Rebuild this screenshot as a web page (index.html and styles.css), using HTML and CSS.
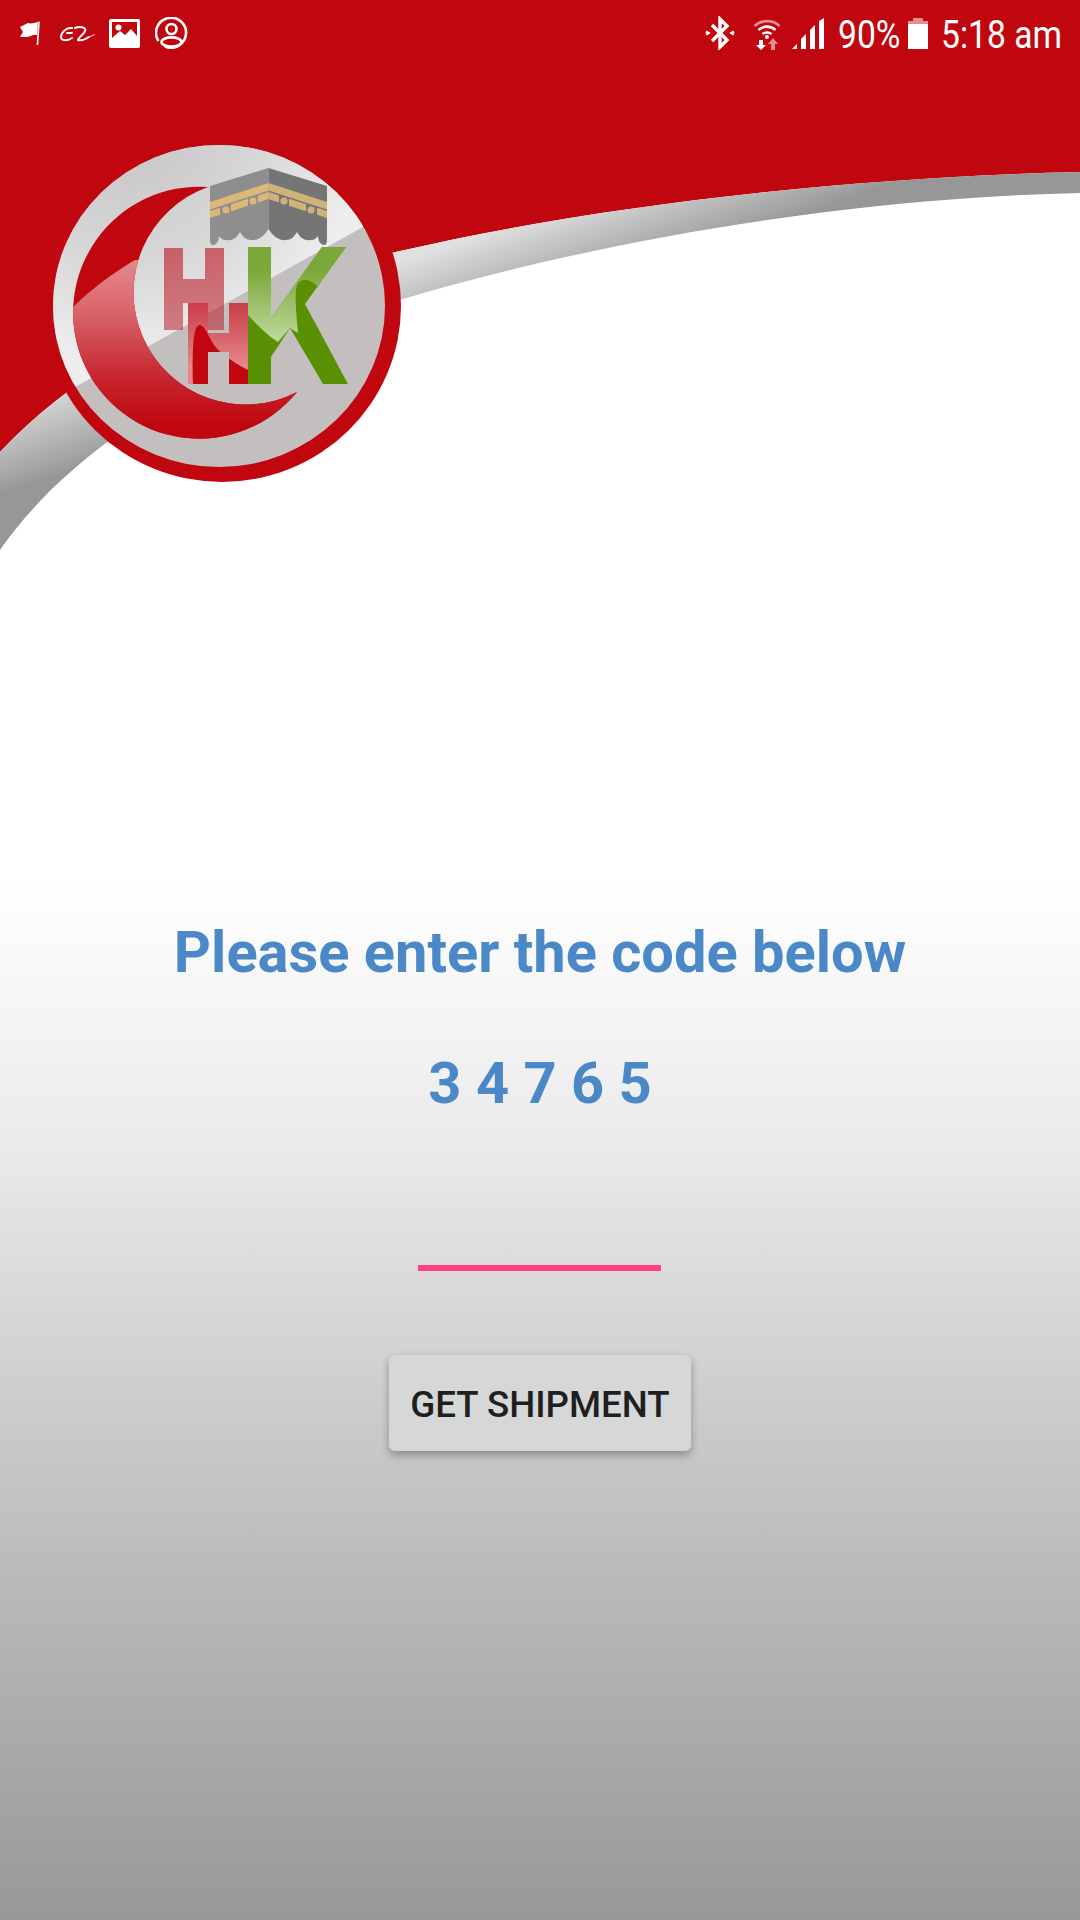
FILE: index.html
```html
<!DOCTYPE html>
<html lang="en">
<head>
    <meta charset="UTF-8">
    <title>Get Shipment</title>
    <meta name="viewport" content="width=device-width, initial-scale=1.0">
    <link rel="stylesheet" href="styles.css">
</head>
<body>
<div class="page">

    <!-- red header, grey swoosh and logo -->
    <svg class="header-art" width="1080" height="600" viewBox="0 0 1080 600">
        <defs>
            <linearGradient id="bandGrad" gradientUnits="userSpaceOnUse" x1="0" y1="400" x2="31" y2="489">
                <stop offset="0" stop-color="#e2e1e1"/>
                <stop offset="0.4" stop-color="#c2c2c2"/>
                <stop offset="0.75" stop-color="#a8a8a8"/>
                <stop offset="0.95" stop-color="#979797"/>
            </linearGradient>
            <radialGradient id="glassGrad" gradientUnits="userSpaceOnUse" cx="130" cy="130" r="260">
                <stop offset="0" stop-color="#c6c4c4"/>
                <stop offset="0.5" stop-color="#d8d7d7"/>
                <stop offset="0.9" stop-color="#eeeeee"/>
            </radialGradient>
            <linearGradient id="moonGrad" gradientUnits="userSpaceOnUse" x1="0" y1="262" x2="0" y2="425">
                <stop offset="0" stop-color="#e4878b"/>
                <stop offset="0.3" stop-color="#d9666d"/>
                <stop offset="0.7" stop-color="#c7262f"/>
                <stop offset="1" stop-color="#c0070f"/>
            </linearGradient>
            <linearGradient id="hOneGrad" gradientUnits="userSpaceOnUse" x1="0" y1="248" x2="0" y2="330">
                <stop offset="0" stop-color="#bc1725" stop-opacity="0.62"/>
                <stop offset="1" stop-color="#bc1725" stop-opacity="0.52"/>
            </linearGradient>
            <linearGradient id="hTwoGrad" gradientUnits="userSpaceOnUse" x1="0" y1="303" x2="0" y2="368">
                <stop offset="0" stop-color="#c93c47"/>
                <stop offset="1" stop-color="#e5898d"/>
            </linearGradient>
            <linearGradient id="kGrad" gradientUnits="userSpaceOnUse" x1="0" y1="270" x2="0" y2="338">
                <stop offset="0" stop-color="#7ba83a"/>
                <stop offset="1" stop-color="#bcd79a"/>
            </linearGradient>
            <clipPath id="discClip"><ellipse cx="219" cy="306" rx="166" ry="161"/></clipPath>
            <clipPath id="hTwoClip"><path d="M188,303H208V333H229V303H248V384H229V352H208V384H188Z"/></clipPath>
            <clipPath id="kClip"><path d="M248,247H271V318L322,247H346L305,304L348,384H323L290,328L271,357V384H248Z"/></clipPath>
            <clipPath id="moonClip"><path d="M208,187A126,126 0 1 0 297,392A112,112 0 1 1 208,187Z"/></clipPath>
            <polygon id="kaabaBand" points="210,202 268.5,183 268.5,190.5 210,209.5"/>
            <g id="kaabaTrim">
                <polygon points="210,211 220,207.8 220,214.8 210,218"/>
                <polygon points="231,204.3 248,198.8 248,205.8 231,211.3"/>
                <polygon points="258,195.6 268.5,192 268.5,199 258,202.6"/>
                <circle cx="226" cy="210" r="3.6"/>
                <circle cx="253" cy="201" r="3.6"/>
            </g>
        </defs>

        <path fill="#c0070f" d="M0,0H1080V172C850,177 600,205 400,251C250,285 100,345 0,452Z"/>
        <path fill="url(#bandGrad)" d="M0,452C100,345 250,285 400,251C600,205 850,177 1080,172V193C850,198 600,240 400,300C200,365 70,450 0,550Z"/>

        <ellipse cx="222" cy="306" rx="179" ry="176" fill="#c0070f"/>
        <ellipse cx="219" cy="306" rx="166" ry="161" fill="#c3bfbe"/>
        <polygon clip-path="url(#discClip)" fill="url(#glassGrad)" points="40,130 400,130 363,227 75,387 40,405"/>

        <path fill="#c0070f" d="M208,187A126,126 0 1 0 297,392A112,112 0 1 1 208,187Z"/>
        <path clip-path="url(#moonClip)" fill="url(#moonGrad)" d="M72,308C84,296 106,277 135,260H330V450H60Z"/>

        <path fill="url(#hOneGrad)" d="M164,248H183V279H205V248H224V330H205V303H183V330H164Z"/>
        <path fill="url(#hTwoGrad)" d="M188,303H208V333H229V303H248V384H229V352H208V384H188Z"/>
        <path clip-path="url(#hTwoClip)" fill="#c0070f" d="M193,384C192,350 193,324 200,325C207,326 210,345 222,353C230,360 240,366 248,370V384Z"/>

        <path fill="#5a9104" d="M248,247H271V318L322,247H346L305,304L348,384H323L290,328L271,357V384H248Z"/>
        <path clip-path="url(#kClip)" fill="url(#kGrad)" d="M244,240H350L318,287C312,279 300,277 297,285C294,296 297,320 298,333L290,328L278,342C268,336 258,326 248,315L244,312Z"/>

        <path fill="#8e8e8e" d="M210,186L268.5,168V229C264,236 258,241 251,240C246,240 243,237 240,232C237,238 232,241 226,240C222,240 221,238 219,236C219,241 216,245 213,245C211,245 210,243 210,240Z"/>
        <path fill="#757575" d="M327,186L268.5,168V229C273,236 279,241 286,240C291,240 294,237 297,232C300,238 305,241 311,240C315,240 316,238 318,236C318,241 321,245 324,245C326,245 327,243 327,240Z"/>
        <use href="#kaabaBand" fill="#d9b878"/>
        <use href="#kaabaBand" fill="#ceb27a" transform="translate(537,0) scale(-1,1)"/>
        <use href="#kaabaTrim" fill="#d9b878"/>
        <use href="#kaabaTrim" fill="#ceb27a" transform="translate(537,0) scale(-1,1)"/>
    </svg>

    <header class="status-bar">
        <div class="status-group">
            <svg class="icon icon-flag" width="20" height="24" viewBox="0 0 20 24">
                <path fill="#fff" d="M0,6C3,5 5,3 8,2C11,3 14,2 18,1L17,14C13,13 11,16 7,16C5,16 2,16 0,16L3,11Z"/>
                <path fill="none" stroke="#fff" stroke-width="1.6" d="M19,0.5L17.4,24"/>
            </svg>
            <svg class="icon icon-ali" width="35" height="18" viewBox="0 0 35 18">
                <path fill="none" stroke="#fff" stroke-width="2" stroke-linecap="round" d="M12,4C6,3 1,9 1,13C1,17 8,17 12,14M7,9H12"/>
                <path fill="none" stroke="#fff" stroke-width="2" stroke-linecap="round" d="M15,4C19,2 27,3 25,7C24,10 18,14 18,16C22,17 26,15 29,13"/>
                <path fill="none" stroke="#fff" stroke-width="0.8" stroke-linecap="round" d="M29,13L35,10.5"/>
            </svg>
            <svg class="icon icon-image" width="31" height="29" viewBox="0 0 31 29">
                <path fill="#fff" fill-rule="evenodd" d="M2,0H29A2,2 0 0 1 31,2V27A2,2 0 0 1 29,29H2A2,2 0 0 1 0,27V2A2,2 0 0 1 2,0ZM3,3V19L11,12L16,16L22,10L28,17V3Z"/>
                <circle cx="9.5" cy="8.5" r="3" fill="#fff"/>
            </svg>
            <svg class="icon icon-user" width="33" height="32" viewBox="0 0 33 32" fill="none" stroke="#fff" stroke-width="2.6">
                <path d="M3.5,24A15,15 0 1 1 10,29.5"/>
                <circle cx="16.5" cy="12" r="5"/>
                <ellipse cx="16.5" cy="25" rx="10" ry="4.6"/>
            </svg>
        </div>
        <div class="status-group">
            <svg class="icon icon-bt" width="30" height="34" viewBox="0 0 30 34" fill="none" stroke="#fff" stroke-width="3.4">
                <path d="M7,9L22,24L15,31V3L22,10L7,25"/>
                <path d="M1,15.5L3.5,17L1,18.5M29,15.5L26.5,17L29,18.5" stroke-width="2.4"/>
            </svg>
            <svg class="icon icon-wifi" width="28" height="33" viewBox="0 0 28 33" fill="none">
                <path stroke="#e58d90" stroke-width="2.6" d="M1.5,9C8,2.5 20,2.5 26.5,9"/>
                <path stroke="#fff" stroke-width="2.6" d="M5.5,13C10.5,8.5 17.5,8.5 22.5,13M9.5,17C12,15 16,15 18.5,17"/>
                <circle cx="14" cy="20" r="2" fill="#fff"/>
                <path fill="#fff" d="M6,23H10V28H13L8,33L3,28H6Z"/>
                <path fill="#e58d90" d="M18,33V27H15L20,21L25,27H22V33Z"/>
            </svg>
            <svg class="icon icon-signal" width="32" height="31" viewBox="0 0 32 31">
                <polygon fill="#fff" points="0,31 5,26 5,31"/>
                <polygon fill="#fff" points="9,31 9,21 14,16 14,31"/>
                <polygon fill="#fff" points="18,31 18,12 23,7 23,31"/>
                <polygon fill="#fff" points="27,31 27,3 32,0 32,31"/>
            </svg>
            <span class="status-text status-battery">90%</span>
            <svg class="icon icon-batt" width="20" height="31" viewBox="0 0 20 31">
                <path fill="#e58d90" d="M5,0H15V3H20V7H0V3H5Z"/>
                <rect y="6" width="20" height="25" fill="#fff"/>
            </svg>
            <span class="status-text status-time">5:18 am</span>
        </div>
    </header>

    <main class="code-form">
        <h1 class="code-title">Please enter the code below</h1>
        <p class="code-value">3 4 7 6 5</p>
        <div class="code-input"></div>
        <button class="shipment-btn">GET SHIPMENT</button>
    </main>

</div>
</body>
</html>
```

FILE: styles.css
```css
body {
    margin: 0;
    padding: 0;
    font-family: Roboto, "Liberation Sans", sans-serif;
}

.page {
    position: relative;
    width: 1080px;
    height: 1920px;
    overflow: hidden;
    background: linear-gradient(to bottom, #fff 0, #fff 880px, #ebebeb 1140px, #dfdfdf 1240px, #c4c4c4 1480px, #989898 1920px);
}

/* header drawing lies under everything else */
.header-art {
    position: absolute;
    top: 0;
    left: 0;
}

.status-bar {
    position: relative;
    display: flex;
    justify-content: space-between;
    align-items: center;
    height: 66px;
    padding: 0 18px 0 20px;
    color: #fff;
}

.status-group {
    display: flex;
    align-items: center;
}

.icon {
    display: block;
    flex: none;
}

.icon-ali { margin-left: 20px; }
.icon-image { margin-left: 14px; }
.icon-user { margin-left: 15px; }
.icon-wifi { margin-left: 18px; }
.icon-signal { margin-left: 11px; }
.icon-batt { margin-left: 9px; }

/* the status bar font is a condensed one, so Roboto is squeezed */
.status-text {
    display: block;
    margin-top: 3px;
    font-size: 38px;
    line-height: 44px;
    white-space: nowrap;
    transform: scaleX(0.885);
    transform-origin: left center;
}

.status-battery {
    width: 61px;
    margin-left: 14px;
}

.status-time {
    width: 121px;
    margin-left: 13px;
}

.code-form {
    position: relative;
    display: flex;
    flex-direction: column;
    align-items: center;
    padding-top: 851px;
    color: #4a88c8;
}

.code-title {
    margin: 0;
    font-size: 57.8px;
    line-height: 70px;
    font-weight: 700;
}

.code-value {
    margin: 61px 0 0;
    font-size: 57.8px;
    line-height: 70px;
    font-weight: 700;
}

.code-input {
    width: 243px;
    height: 6px;
    margin: 147px 1px 0 0;
    background: #ff4081;
}

.shipment-btn {
    width: 302px;
    height: 96px;
    margin-top: 84px;
    padding: 2px 0 0;
    border: 0;
    border-radius: 6px;
    background: #d6d8d8;
    box-shadow: 0 4px 8px rgba(0, 0, 0, 0.3);
    color: #1f1f1f;
    font-family: inherit;
    font-size: 36.7px;
    font-weight: 500;
}
```
